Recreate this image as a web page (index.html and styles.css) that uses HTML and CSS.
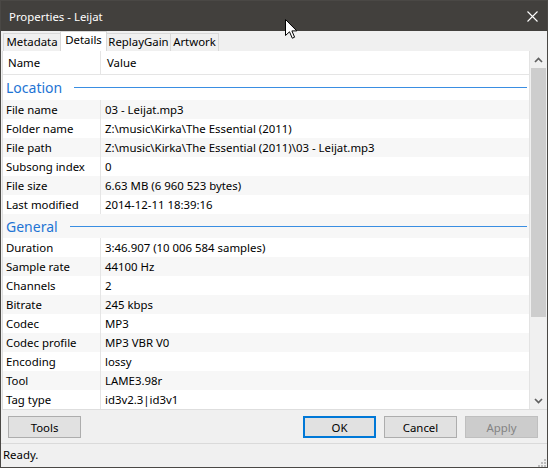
FILE: index.html
```html
<!DOCTYPE html>
<html lang="en">
<head>
    <meta charset="UTF-8">
    <title>Properties - Leijat</title>
    <link rel="stylesheet" href="styles.css">
</head>
<body>
    <div class="window">
        <div class="titlebar">
            <span class="title">Properties - Leijat</span>
            <svg class="close" width="11" height="11" viewBox="0 0 11 11">
                <path d="M0.5 0.5 L10.5 10.5 M10.5 0.5 L0.5 10.5" stroke="#fff" stroke-width="1.1" fill="none"/>
            </svg>
        </div>

        <div class="tabs">
            <div class="tab tab-metadata">Metadata</div>
            <div class="tab tab-details active">Details</div>
            <div class="tab tab-replaygain">ReplayGain</div>
            <div class="tab tab-artwork">Artwork</div>
        </div>

        <div class="list">
            <div class="rows">
                <div class="row head"><div class="name">Name</div><div class="value">Value</div></div>

                <div class="group">Location</div>
                <div class="row odd"><div class="name">File name</div><div class="value">03 - Leijat.mp3</div></div>
                <div class="row"><div class="name">Folder name</div><div class="value">Z:\music\Kirka\The Essential (2011)</div></div>
                <div class="row odd"><div class="name">File path</div><div class="value">Z:\music\Kirka\The Essential (2011)\03 - Leijat.mp3</div></div>
                <div class="row"><div class="name">Subsong index</div><div class="value">0</div></div>
                <div class="row odd"><div class="name">File size</div><div class="value">6.63 MB (6 960 523 bytes)</div></div>
                <div class="row"><div class="name">Last modified</div><div class="value">2014-12-11 18:39:16</div></div>

                <div class="group odd second">General</div>
                <div class="row"><div class="name">Duration</div><div class="value">3:46.907 (10 006 584 samples)</div></div>
                <div class="row odd"><div class="name">Sample rate</div><div class="value">44100 Hz</div></div>
                <div class="row"><div class="name">Channels</div><div class="value">2</div></div>
                <div class="row odd"><div class="name">Bitrate</div><div class="value">245 kbps</div></div>
                <div class="row"><div class="name">Codec</div><div class="value">MP3</div></div>
                <div class="row odd"><div class="name">Codec profile</div><div class="value">MP3 VBR V0</div></div>
                <div class="row"><div class="name">Encoding</div><div class="value">lossy</div></div>
                <div class="row odd"><div class="name">Tool</div><div class="value">LAME3.98r</div></div>
                <div class="row"><div class="name">Tag type</div><div class="value">id3v2.3|id3v1</div></div>
            </div>

            <div class="scrollbar">
                <div class="arrow">
                    <svg width="9" height="6" viewBox="0 0 9 6"><path d="M1 5 L4.5 1.5 L8 5" stroke="#606060" stroke-width="1.7" fill="none"/></svg>
                </div>
                <div class="track"><div class="thumb"></div></div>
                <div class="arrow">
                    <svg width="9" height="6" viewBox="0 0 9 6"><path d="M1 1 L4.5 4.5 L8 1" stroke="#606060" stroke-width="1.7" fill="none"/></svg>
                </div>
            </div>
        </div>

        <div class="buttons">
            <div class="btn">Tools</div>
            <div class="btn default push">OK</div>
            <div class="btn">Cancel</div>
            <div class="btn disabled">Apply</div>
        </div>

        <div class="status">
            Ready.
            <svg class="grip" width="9" height="9" viewBox="0 0 9 9">
                <rect x="6" y="0" width="2" height="2" fill="#bcbcbc"/>
                <rect x="3" y="3" width="2" height="2" fill="#bcbcbc"/>
                <rect x="6" y="3" width="2" height="2" fill="#bcbcbc"/>
                <rect x="0" y="6" width="2" height="2" fill="#bcbcbc"/>
                <rect x="3" y="6" width="2" height="2" fill="#bcbcbc"/>
                <rect x="6" y="6" width="2" height="2" fill="#bcbcbc"/>
            </svg>
        </div>

        <!-- mouse pointer sitting over the title bar -->
        <svg class="cursor" width="13" height="20" viewBox="0 0 13 20">
            <path d="M0.5 0.5 L0.5 16.5 L4.5 12.8 L7.3 19.2 L9.6 18.2 L6.9 11.9 L11.8 11.9 Z" fill="#fff" stroke="#000" stroke-width="1"/>
        </svg>
    </div>
</body>
</html>
```

FILE: styles.css
```css
:root {
    --frame: #4a4845;
    --title-bg: #42403d;
    --face: #f0f0f0;
    --grid-line: #e5e5e5;
    --stripe: #f7f7f7;
    --group-text: #1e74d4;
    --group-line: #3a8ee2;
}

body {
    margin: 0;
    background: var(--face);
    font-family: "Noto Sans", sans-serif;
    font-size: 11.4px;
    color: #000;
}

.window {
    position: relative;
    width: 548px;
    height: 468px;
    box-sizing: border-box;
    border: 1px solid var(--frame);
    display: flex;
    flex-direction: column;
    background: var(--face);
    overflow: hidden;
}

.titlebar {
    height: 30px;
    flex: none;
    display: flex;
    align-items: center;
    padding-left: 8px;
    background: var(--title-bg);
    color: #fff;
}

.close {
    margin-left: auto;
    margin-right: 9px;
}

/* tabs */
.tabs {
    height: 20px;
    flex: none;
    display: flex;
    align-items: flex-end;
    padding-left: 2px;
}

.tab {
    height: 18px;
    box-sizing: border-box;
    border: 1px solid #d9d9d9;
    border-bottom: none;
    margin-right: -1px;
    text-align: center;
    line-height: 16px;
    background: var(--face);
}

.tab.active {
    position: relative;
    z-index: 1;
    height: 20px;
    line-height: 16px;
    background: #fff;
}

.tab-metadata { width: 58px; }
.tab-details { width: 47px; }
.tab-replaygain { width: 65px; }
.tab-artwork { width: 49px; }

/* list view */
.list {
    height: 359px;
    flex: none;
    box-sizing: border-box;
    margin-left: 1px;
    border-left: 1px solid #dedede;
    border-bottom: 1px solid #dedede;
    display: flex;
    background: #fff;
}

.rows {
    flex: 1;
    overflow: hidden;
    border-right: 1px solid #e3e3e3;
}

.row {
    display: flex;
    height: 19px;
    align-items: center;
}

.row.odd,
.group.odd {
    background: var(--stripe);
}

.name {
    width: 98px;
    height: 100%;
    box-sizing: border-box;
    display: flex;
    align-items: center;
    padding-left: 3px;
    border-right: 1px solid var(--grid-line);
    white-space: nowrap;
}

.value {
    padding-left: 4px;
    white-space: nowrap;
}

.row.head {
    height: 24px;
    box-sizing: border-box;
    border-bottom: 1px solid var(--grid-line);
    background: #fff;
}

.row.head .name {
    padding-left: 5px;
}

.row.head .value {
    padding-left: 6px;
}

.group {
    height: 25px;
    display: flex;
    align-items: center;
    padding-left: 3px;
    color: var(--group-text);
    font-size: 14px;
}

.group.second {
    height: 24px;
}

.group::after {
    content: "";
    flex: 1;
    height: 1px;
    margin: 0 2px 0 12px;
    background: var(--group-line);
}

/* scrollbar */
.scrollbar {
    width: 17px;
    flex: none;
    display: flex;
    flex-direction: column;
    background: var(--face);
}

.arrow {
    height: 17px;
    flex: none;
    display: flex;
    align-items: center;
    justify-content: center;
}

.track {
    flex: 1;
}

.thumb {
    height: 249px;
    margin: 0 1px;
    background: #cdcdcd;
}

/* buttons */
.buttons {
    height: 33px;
    flex: none;
    box-sizing: border-box;
    display: flex;
    align-items: flex-start;
    gap: 8px;
    padding: 6px 9px 0 7px;
}

.btn {
    width: 73px;
    height: 22px;
    box-sizing: border-box;
    display: flex;
    align-items: center;
    justify-content: center;
    background: #e1e1e1;
    border: 1px solid #adadad;
}

.btn.push {
    margin-left: auto;
}

.btn.default {
    border: 2px solid #0078d7;
}

.btn.disabled {
    background: #cccccc;
    border-color: #bfbfbf;
    color: #838383;
}

/* status bar */
.status {
    position: relative;
    height: 24px;
    flex: none;
    box-sizing: border-box;
    border-top: 1px solid #dadada;
    padding-left: 2px;
    line-height: 22px;
}

.grip {
    position: absolute;
    right: 0;
    bottom: -1px;
}

.cursor {
    position: absolute;
    left: 284px;
    top: 18px;
}
```
